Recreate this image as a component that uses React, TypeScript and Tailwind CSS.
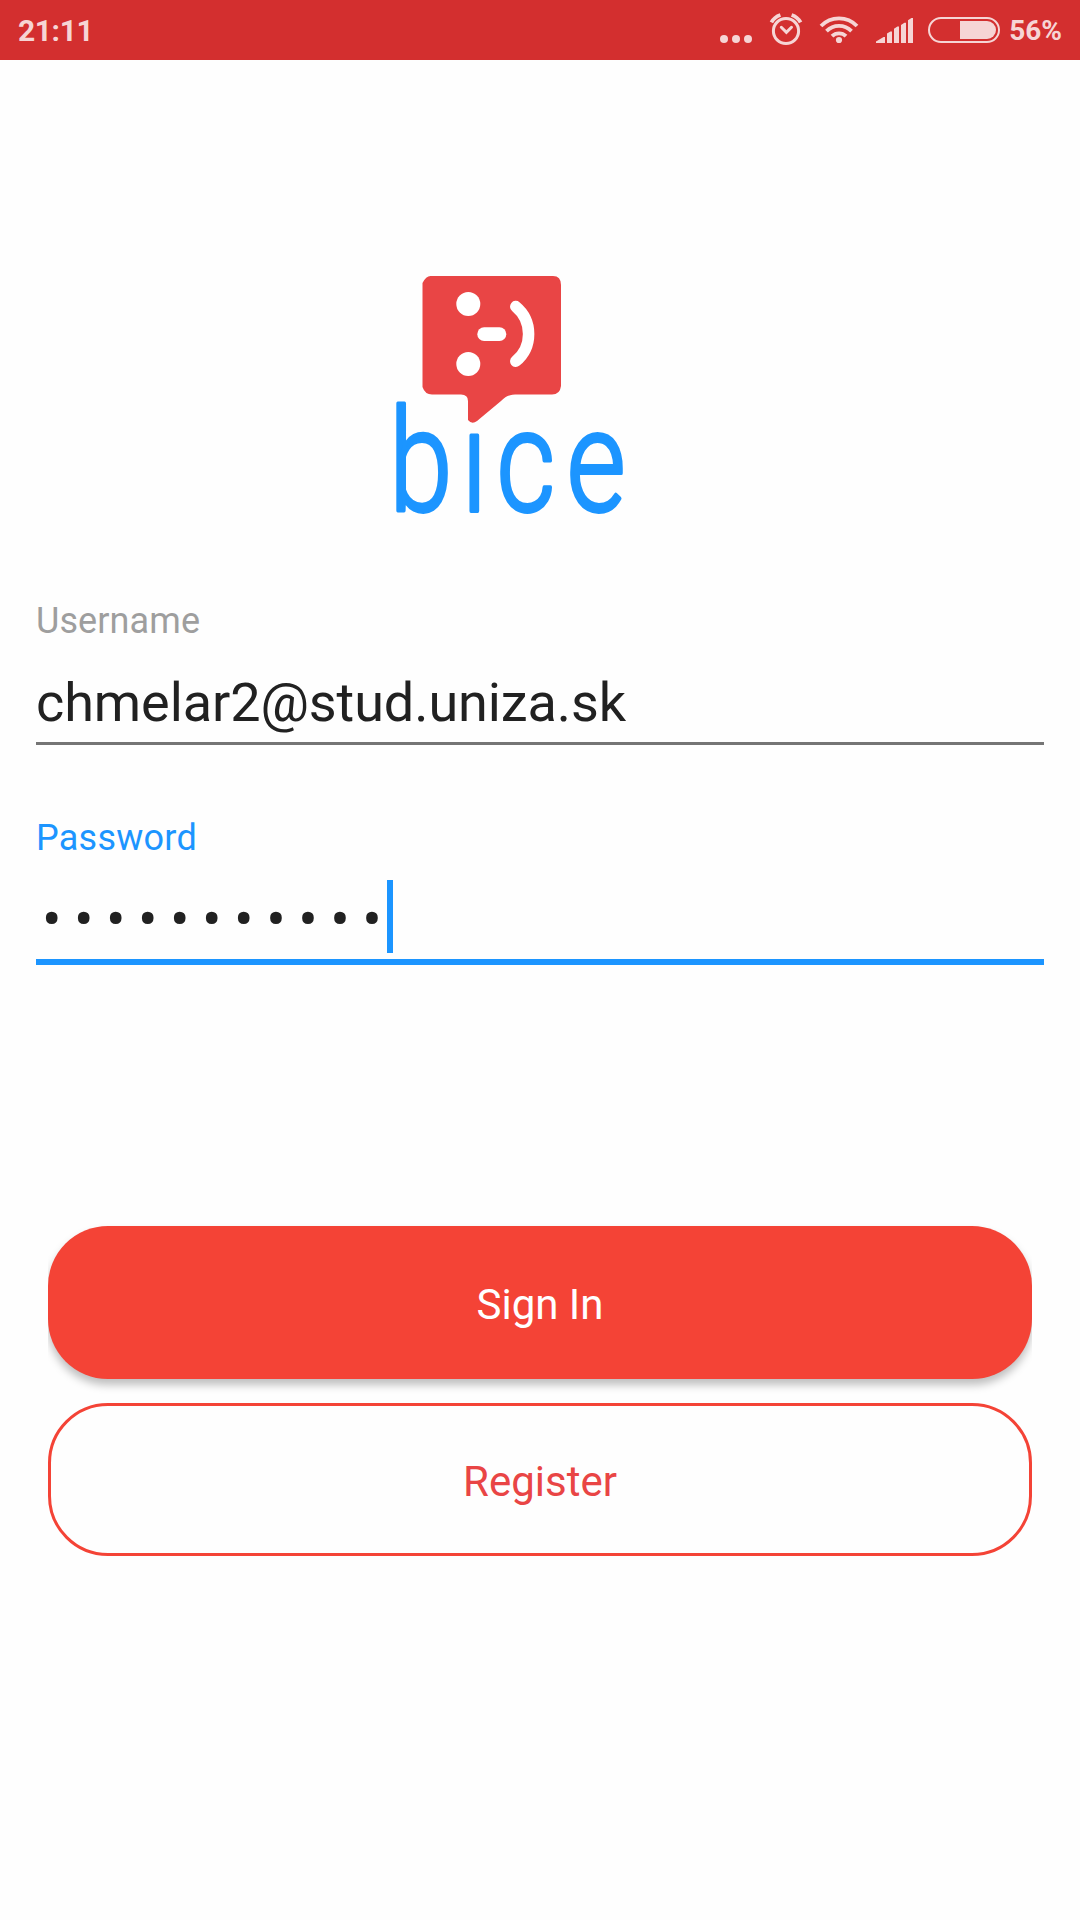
const INK = '#f6d5d5';

function StatusBar() {
  return (
    <header className="flex h-[60px] items-start bg-[#d32f2f] text-[#f6d5d5]">
      <span className="ml-[18px] mt-[13px] text-[30px] leading-[36px] font-bold tracking-[-0.4px]">21:11</span>
      <div className="ml-auto flex">
        <svg width="32" height="60" viewBox="720 0 32 60" fill={INK}>
          <circle cx="724" cy="39" r="4" />
          <circle cx="736" cy="39" r="4" />
          <circle cx="748" cy="39" r="4" />
        </svg>
        <svg className="ml-[16px]" width="36" height="60" viewBox="768 0 36 60" fill="none" stroke={INK} strokeWidth="3">
          <circle cx="786" cy="31" r="12.6" />
          <path d="M781.3 27.3L786.4 32.4L791.5 27.3" strokeLinecap="round" />
          <path d="M771.4 22.4Q774.4 17 780.4 15M800.6 22.4Q797.6 17 791.6 15" strokeWidth="3.8" />
        </svg>
        <svg className="ml-[14px]" width="42" height="60" viewBox="818 0 42 60" fill="none" stroke={INK} strokeWidth="3.8">
          <circle cx="839" cy="40" r="3.1" fill={INK} stroke="none" />
          <path d="M821 26A25 25 0 0 1 857 26M826.5 31.2A17.5 17.5 0 0 1 851.5 31.2M832 36.2A10 10 0 0 1 846 36.2" />
        </svg>
        <svg className="ml-[15px]" width="40" height="60" viewBox="875 0 40 60" fill={INK}>
          <path d="M876 43V41.5L883.6 37H885V43ZM887 43V33.4L890.4 31.5H892V43ZM894 43V28.8L897.4 26.5H899V43ZM901 43V25L904.4 22.8H906V43ZM908 43V20.2L911.4 18H913V43Z" />
        </svg>
        <svg className="ml-[11px]" width="76" height="60" viewBox="926 0 76 60">
          <rect x="929" y="18" width="70" height="24" rx="12" fill="none" stroke={INK} strokeWidth="2" />
          <path d="M960 21H987A9 9 0 0 1 987 39H960Z" fill={INK} />
        </svg>
      </div>
      <span className="ml-[7px] mr-[18px] mt-[14px] text-[28px] leading-[34px] font-bold">56%</span>
    </header>
  );
}

function Logo() {
  return (
    <svg className="ml-[390px] mt-[210px] overflow-visible" width="240" height="250" viewBox="390 270 240 250">
      <text
        transform="scale(0.8 1)"
        x="486.5 577 620.5 708.5"
        y="511.3"
        fontSize="142"
        fontFamily="Roboto"
        fontWeight="300"
        fill="#1c95ff"
        stroke="#1c95ff"
        strokeWidth="3.800"
        strokeLinejoin="round"
      >
        bice
      </text>
      <path
        fill="#e94545"
        d="M430.500 276H553Q561 276 561 285V386Q560 394.500 552 394.500H518C510 394.500 506 396 501 401L477 421Q472 425 468 420V401Q468 394.500 461 394.500H432Q425 394.500 422.500 387V283Q426 276 430.500 276Z"
      />
      <circle cx="468.300" cy="304" r="12" fill="#fff" />
      <circle cx="468.300" cy="364" r="12" fill="#fff" />
      <rect x="477.300" y="327.300" width="29" height="13.700" rx="6.800" fill="#fff" />
      <path d="M515.800 306.600A35.500 35.500 0 0 1 515.800 361.200" fill="none" stroke="#fff" strokeWidth="11.500" strokeLinecap="round" />
    </svg>
  );
}

export default function App() {
  return (
    <div className="flex h-[1920px] w-[1080px] flex-col overflow-hidden bg-[#fefefe] font-['Roboto',sans-serif]">
      <StatusBar />
      <Logo />
      <main className="flex flex-col px-9">
        <label className="mt-[80px] h-[42px] text-[36px] leading-[42px] tracking-[0.1px] text-[#9e9e9e]">Username</label>
        <div className="mt-[29px] h-[74px] border-b-[3px] border-[#757575] text-[54px] leading-[64px] tracking-[-0.09px] text-[#212121]">
          chmelar2@stud.uniza.sk
        </div>
        <label className="mt-[72px] h-[42px] text-[36px] leading-[42px] tracking-[0.25px] text-[#1c95ff]">Password</label>
        <div className="mt-[21px] flex h-[85px] items-start border-b-[6px] border-[#1c95ff]">
          <span className="w-[351px] pl-[6px] text-[58px] leading-[78px] tracking-[12.45px] whitespace-nowrap text-[#212121]">
            •••••••••••
          </span>
          <span className="h-[73px] w-[6px] bg-[#1c95ff]" />
        </div>
        <div className="mx-3 mt-[261px] flex flex-col gap-6 [clip-path:inset(-20px_0)]">
          <button className="h-[153px] rounded-[60px] bg-[#f44336] pt-[3px] text-[42px] text-white shadow-[0_6px_8px_rgba(0,0,0,0.25)]">
            Sign In
          </button>
          <button className="h-[153px] rounded-[60px] border-3 border-[#f44336] pt-[3px] text-[42px] text-[#e94545]">
            Register
          </button>
        </div>
      </main>
    </div>
  );
}
